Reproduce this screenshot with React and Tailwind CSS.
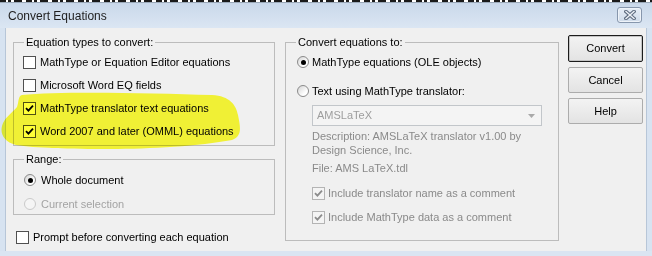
import React from "react";

function CheckBox({ checked, disabled }) {
  return (
    <span
      className={`inline-flex shrink-0 items-center justify-center w-[13px] h-[13px] border ${
        disabled ? "border-[#b4b4b4] bg-[#f4f4f4]" : "border-[#505050] bg-white"
      }`}
    >
      {checked && (
        <svg width="9" height="9" viewBox="0 0 9 9">
          <path
            d="M1 4.2 L3.4 6.6 L8 1.6"
            fill="none"
            stroke={disabled ? "#8c8c8c" : "#000"}
            strokeWidth="1.8"
          />
        </svg>
      )}
    </span>
  );
}

function Radio({ checked, disabled }) {
  return (
    <span
      className={`inline-flex shrink-0 items-center justify-center w-[12px] h-[12px] rounded-full border ${
        disabled
          ? "border-[#cacaca] bg-[#f5f5f5]"
          : "border-[#8a8a8a] bg-[linear-gradient(135deg,#d4d4d4,#ffffff_70%)]"
      }`}
    >
      {checked && <span className="w-[5px] h-[5px] rounded-full bg-black" />}
    </span>
  );
}

function Row({ children, className = "" }) {
  return <div className={`flex items-center h-[16px] ${className}`}>{children}</div>;
}

export default function App() {
  return (
    <div className="relative w-[652px] h-[256px] overflow-hidden bg-[#d7e3f1] font-['Liberation_Sans',Arial,sans-serif] text-[11px] text-black flex flex-col">
      {/* document text peeking above */}
      <div className="h-[2px] bg-[repeating-linear-gradient(90deg,#1a1a1a_0px,#1a1a1a_6px,#ffffff_6px,#ffffff_8px,#1a1a1a_8px,#1a1a1a_11px,#ffffff_11px,#ffffff_14px,#1a1a1a_14px,#1a1a1a_22px,#ffffff_22px,#ffffff_26px)]" />
      <div className="h-[1px] bg-[#9aa8b8]" />
      {/* title bar */}
      <div className="h-[25px] flex items-center justify-between pl-[8px] pr-[10px] bg-[linear-gradient(#c9d8ea,#dbe6f3)]">
        <span className="text-[12px] text-[#1e1e1e]">Convert Equations</span>
        <div className="mt-[-2px] w-[25px] h-[16px] rounded-[3px] border border-[#8797ad] bg-[linear-gradient(#e6edf6,#cfdbe9)] flex items-center justify-center shadow-[inset_0_0_0_1px_#eef3f9]">
          <svg width="12" height="10" viewBox="0 0 12 10">
            <path d="M2 1.5 L10 8.5 M10 1.5 L2 8.5" stroke="#5f6d80" strokeWidth="3.6" strokeLinecap="square" />
            <path d="M2 1.5 L10 8.5 M10 1.5 L2 8.5" stroke="#eef2f7" strokeWidth="1.4" strokeLinecap="square" />
          </svg>
        </div>
      </div>
      {/* body */}
      <div className="mx-[5px] h-[223px] bg-[#f0f0f0] flex pt-[7px] pl-[7px] border-l border-r border-[#b7c6d8]">
        {/* left column */}
        <div className="w-[262px] flex flex-col">
          <fieldset className="border border-[#bcbcbc] h-[111px]">
            <legend className="ml-[10px] px-[2px] leading-[14px]">Equation types to convert:</legend>
            <div className="flex flex-col gap-[7px] pl-[9px] pt-[5px]">
              <Row>
                <CheckBox />
                <span className="ml-[4px]">MathType or Equation Editor equations</span>
              </Row>
              <Row>
                <CheckBox />
                <span className="ml-[4px]">Microsoft Word EQ fields</span>
              </Row>
              <Row>
                <CheckBox checked />
                <span className="ml-[4px]">MathType translator text equations</span>
              </Row>
              <Row>
                <CheckBox checked />
                <span className="ml-[4px]">Word 2007 and later (OMML) equations</span>
              </Row>
            </div>
          </fieldset>
          <fieldset className="mt-[6px] border border-[#bcbcbc] h-[63px]">
            <legend className="ml-[10px] px-[2px] leading-[14px]">Range:</legend>
            <div className="flex flex-col gap-[8px] pl-[10px] pt-[6px]">
              <Row>
                <Radio checked />
                <span className="ml-[5px]">Whole document</span>
              </Row>
              <Row>
                <Radio disabled />
                <span className="ml-[5px] text-[#a3a3a3]">Current selection</span>
              </Row>
            </div>
          </fieldset>
          <Row className="mt-[14px] ml-[3px]">
            <CheckBox />
            <span className="ml-[4px]">Prompt before converting each equation</span>
          </Row>
        </div>
        {/* middle group */}
        <fieldset className="ml-[10px] w-[274px] h-[206px] border border-[#bcbcbc]">
          <legend className="ml-[10px] px-[2px] leading-[14px]">Convert equations to:</legend>
          <div className="flex flex-col pl-[11px] pt-[5px]">
            <Row>
              <Radio checked />
              <span className="ml-[3px]">MathType equations (OLE objects)</span>
            </Row>
            <Row className="mt-[13px]">
              <Radio />
              <span className="ml-[3px]">Text using MathType translator:</span>
            </Row>
            <div className="mt-[6px] ml-[15px] w-[230px] h-[21px] border border-[#c2c6ca] bg-[#f4f4f4] flex items-center justify-between">
              <span className="pl-[4px] text-[#9d9d9d]">AMSLaTeX</span>
              <div className="w-[17px] h-[17px] mr-[1px] flex items-center justify-center">
                <svg width="7" height="4" viewBox="0 0 7 4">
                  <path d="M0 0 H7 L3.5 4 Z" fill="#a9a9a9" />
                </svg>
              </div>
            </div>
            <div className="ml-[15px] mt-[4px] text-[#8a8a8a] leading-[13.5px]">
              <div>Description: AMSLaTeX translator v1.00 by</div>
              <div>Design Science, Inc.</div>
            </div>
            <div className="ml-[15px] mt-[5px] text-[#8a8a8a] leading-[13px]">File: AMS LaTeX.tdl</div>
            <Row className="ml-[15px] mt-[10px]">
              <CheckBox checked disabled />
              <span className="ml-[3px] text-[#8a8a8a]">Include translator name as a comment</span>
            </Row>
            <Row className="ml-[15px] mt-[8px]">
              <CheckBox checked disabled />
              <span className="ml-[3px] text-[#8a8a8a]">Include MathType data as a comment</span>
            </Row>
          </div>
        </fieldset>
        {/* buttons */}
        <div className="ml-[9px] w-[75px] flex flex-col gap-[5px]">
          <button className="h-[27px] rounded-[2px] border border-[#1c1c1c] bg-[linear-gradient(#f3f3f3,#e3e3e3)] shadow-[inset_0_0_0_1px_#c4c4c4] text-[11px] leading-none">
            Convert
          </button>
          <button className="h-[26px] rounded-[2px] border border-[#acacac] bg-[linear-gradient(#f3f3f3,#e3e3e3)] text-[11px] leading-none">
            Cancel
          </button>
          <button className="h-[26px] rounded-[2px] border border-[#acacac] bg-[linear-gradient(#f3f3f3,#e3e3e3)] text-[11px] leading-none">
            Help
          </button>
        </div>
      </div>
      <div className="flex-1 bg-[#dae5f2]" />
      {/* yellow highlighter */}
      <svg
        className="absolute left-0 top-0 pointer-events-none mix-blend-multiply"
        width="652"
        height="256"
        viewBox="0 0 652 256"
      >
        <path
          d="M22,95 C60,91 150,93 212,95 C230,96 236,105 238,115 C240,126 243,136 232,140 C200,146 150,149 110,149 C70,149 35,148 16,145 C4,142 0,134 2,126 C4,118 11,114 17,107 C19,101 18,96 22,95 Z"
          fill="#ffff38"
        />
      </svg>
    </div>
  );
}
